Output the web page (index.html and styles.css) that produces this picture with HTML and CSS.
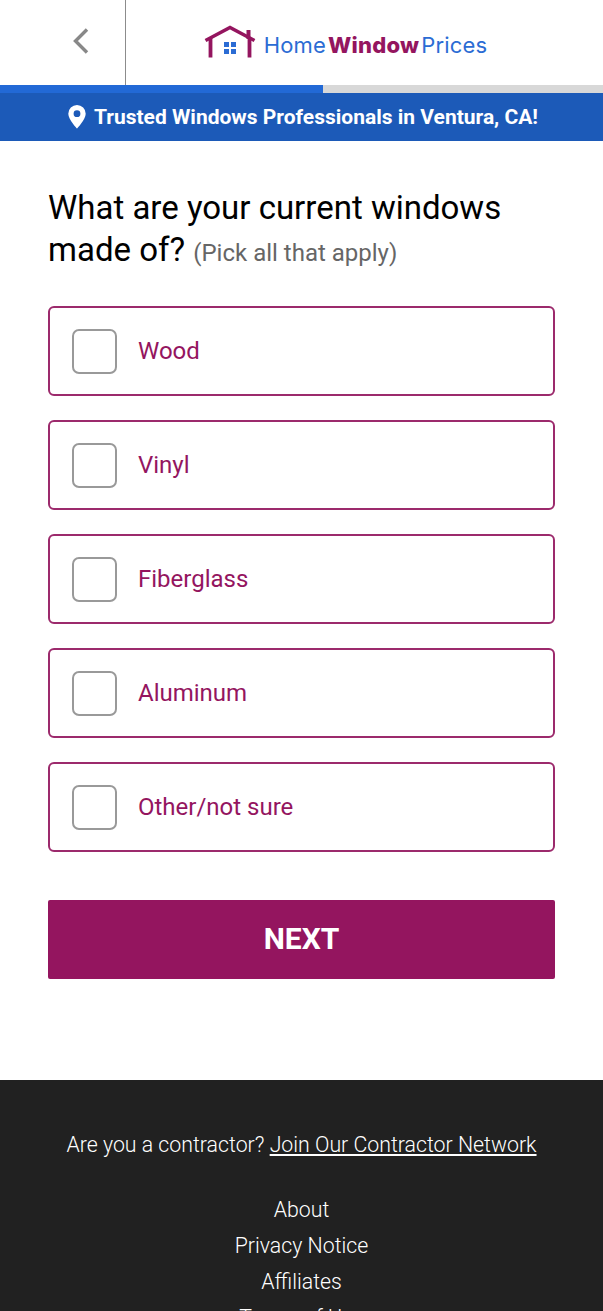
FILE: index.html

```html
<!DOCTYPE html>
<html>
<head>
  <title>Home Window Prices</title>
  <meta name="viewport" content="width=device-width, initial-scale=1">
  <link rel="stylesheet" href="styles.css">
</head>
<body>
  <header class="topbar">
    <div class="back">
      <svg width="18" height="28" viewBox="0 0 18 28"><path d="M15 2.5 L3.5 14 L15 25.5" fill="none" stroke="#888" stroke-width="3.4"/></svg>
    </div>
    <div class="logo">
      <svg class="logo-mark" width="52" height="34" viewBox="0 0 52 34">
        <path d="M1.500 15.500 L26 2.500 L50.500 15.500" fill="none" stroke="#94155f" stroke-width="3.600"/>
        <path d="M6.500 13 V32.500 M45.500 13 V32.500" fill="none" stroke="#94155f" stroke-width="3.800"/>
        <rect x="42.500" y="5" width="4" height="9" fill="#94155f"/>
        <rect x="20" y="17" width="5" height="5" fill="#2b6cd4"/>
        <rect x="27" y="17" width="5" height="5" fill="#2b6cd4"/>
        <rect x="20" y="24" width="5" height="5" fill="#2b6cd4"/>
        <rect x="27" y="24" width="5" height="5" fill="#2b6cd4"/>
      </svg>
      <div class="logo-text"><span>Home</span><b>Window</b><span>Prices</span></div>
    </div>
  </header>

  <div class="progress"><div class="progress-fill"></div></div>

  <div class="banner">
    <svg width="18" height="24" viewBox="0 0 18 24"><path fill-rule="evenodd" d="M9 0a8.700 8.700 0 0 1 8.700 8.700C17.700 14.500 9 23.500 9 23.500S.3 14.500.3 8.700A8.700 8.700 0 0 1 9 0zm0 5.300a3.400 3.400 0 1 0 0 6.800 3.400 3.400 0 0 0 0-6.800z" fill="#fff"/></svg>
    <span>Trusted Windows Professionals in Ventura, CA!</span>
  </div>

  <main class="content">
    <h1 class="question">What are your current windows made of? <small>(Pick all that apply)</small></h1>

    <div class="options">
      <label class="option"><span class="box"></span>Wood</label>
      <label class="option"><span class="box"></span>Vinyl</label>
      <label class="option"><span class="box"></span>Fiberglass</label>
      <label class="option"><span class="box"></span>Aluminum</label>
      <label class="option"><span class="box"></span>Other/not sure</label>
    </div>

    <button class="next">NEXT</button>
  </main>

  <footer class="footer">
    <p class="contractor">Are you a contractor? <a href="#">Join Our Contractor Network</a></p>
    <ul class="links">
      <li>About</li>
      <li>Privacy Notice</li>
      <li>Affiliates</li>
      <li>Terms of Use</li>
    </ul>
  </footer>
</body>
</html>
```

FILE: styles.css

```css
html, body { height: 1311px; overflow: hidden; }
body { margin: 0; font-family: Roboto, sans-serif; background: white; color: black; }

.topbar { display: flex; height: 85px; }
.back { width: 126px; box-sizing: border-box; border-right: 1px solid #8c8c8c; display: flex; justify-content: center; align-items: center; padding: 0 0 4px 36px; }
.logo { flex: 1; display: flex; justify-content: center; align-items: center; gap: 8px; padding: 4px 38px 0 0; }
.logo-mark { margin-bottom: 5px; }
.logo-text { font-family: Inter, sans-serif; font-size: 22px; letter-spacing: 0.2px; color: #2b6cd4; display: flex; gap: 2px; }
.logo-text b { color: #94155f; font-weight: 800; }

.progress { height: 8px; background: #d8d8d8; }
.progress-fill { width: 323px; height: 8px; background: #2269d6; }

.banner { height: 48px; box-sizing: border-box; padding-left: 3px; background: #1c5ab8; color: white; font-size: 21px; font-weight: 700; display: flex; justify-content: center; align-items: center; gap: 8px; }

.content { padding: 46px 48px 0; height: 939px; box-sizing: border-box; }
.question { margin: 0; font-size: 33px; font-weight: 400; line-height: 42px; }
.question small { font-size: 24px; color: #666; }

.options { margin-top: 32px; display: flex; flex-direction: column; gap: 24px; }
.option { height: 90px; box-sizing: border-box; border: 2px solid #9c2a6c; border-radius: 6px; display: flex; align-items: center; gap: 21px; padding-left: 22px; font-size: 24px; color: #94155f; }
.box { width: 45px; height: 45px; box-sizing: border-box; border: 2px solid #999; border-radius: 7px; }

.next { display: block; width: 100%; height: 79px; margin-top: 48px; padding: 0 0 2px; border: none; border-radius: 2px; background: #94155f; color: white; font-family: Roboto, sans-serif; font-size: 30px; font-weight: 700; }

.footer { background: #212121; color: white; text-align: center; font-size: 21.3px; font-weight: 300; padding-top: 52px; height: 400px; box-sizing: border-box; }
.contractor { margin: 0; line-height: 26px; }
.contractor a { color: white; }
.links { list-style: none; margin: 34px 0 0; padding: 0; }
.links li { line-height: 36px; }
```
